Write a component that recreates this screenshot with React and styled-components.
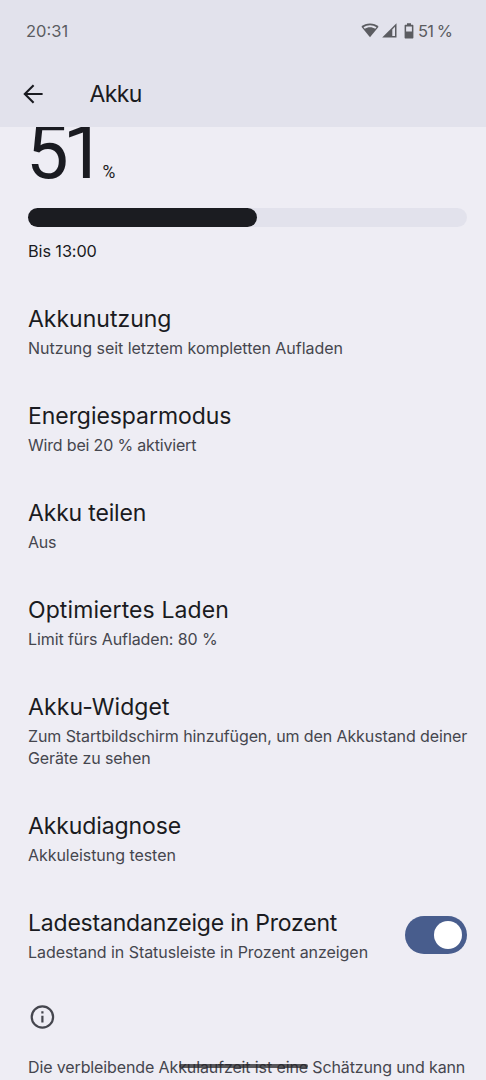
import React, { useState } from 'react'
import styled, { createGlobalStyle } from 'styled-components';

const GlobalStyle = createGlobalStyle`
  * {
    box-sizing: border-box;
  }
  body {
    margin: 0;
    background: #eeedf4;
    font-family: Inter, Roboto, sans-serif;
  }
`

const Screen = styled.div`
  position: relative;
  display: flex;
  flex-direction: column;
  width: 486px;
  height: 1080px;
  overflow: hidden;
  background: #eeedf4;
  color: #1a1b21;
`

const Header = styled.header`
  flex: none;
  height: 127px;
  background: #e2e2ec;
`

const StatusBar = styled.div`
  display: flex;
  align-items: center;
  justify-content: space-between;
  height: 61px;
  padding: 0 34px 0 26px;
  font-size: 16.5px;
  color: #5b5c61;
`

const StatusIcons = styled.div`
  display: flex;
  align-items: center;
  gap: 2px;

  svg {
    display: block;
  }
  svg:nth-of-type(1) {
    margin-right: 1px;
  }
  svg:nth-of-type(3) {
    margin: 0 2px 0 5px;
  }
`

const StatusText = styled.span`
  letter-spacing: ${({ $spacing }) => $spacing || 0}px;
`

const Toolbar = styled.div`
  display: flex;
  align-items: center;
  gap: 46px;
  height: 66px;
  padding-left: 23px;
`

const BackButton = styled.button`
  display: flex;
  padding: 0;
  border: none;
  background: none;
  color: #1a1b21;
`

const PageTitle = styled.h1`
  margin: 0;
  padding-left: 0.5px;
  font-size: 23px;
  font-weight: 370;
  letter-spacing: -0.6px;
`

const Content = styled.main`
  flex: 1;
  min-height: 0;
  overflow: hidden;
  padding: 0 19px 0 28px;
`

const Level = styled.div`
  display: flex;
  align-items: baseline;
  height: 92px;
  margin: -20px 0 0 -2px;
  line-height: 91px;
`

const LevelValue = styled.span`
  font-family: Roboto, sans-serif;
  font-size: 76px;
  letter-spacing: -6px;
`

const LevelUnit = styled.span`
  margin-left: 3px;
  font-family: Roboto, sans-serif;
  font-size: 17.5px;
`

const Track = styled.div`
  height: 19px;
  margin-top: 9px;
  border-radius: 10px;
  background: #e2e2ec;
`

const Fill = styled.div`
  height: 100%;
  border-radius: 10px;
  background: #1b1c21;
`

const Remaining = styled.p`
  margin: 13px 0 41.5px;
  font-size: 16.3px;
  line-height: 22px;
  letter-spacing: -0.1px;
`

const Row = styled.div`
  display: flex;
  align-items: center;
  justify-content: space-between;
  padding-bottom: 41.6px;
`

const RowTitle = styled.div`
  margin-bottom: 4px;
  font-size: 23px;
  font-weight: 370;
  line-height: 30px;
  white-space: nowrap;
  letter-spacing: ${({ $spacing }) => $spacing || 0}px;
`

const Summary = styled.div`
  font-size: 16px;
  line-height: 21.6px;
  color: #45464e;
  white-space: nowrap;
  letter-spacing: ${({ $spacing }) => $spacing || 0}px;
`

const Switch = styled.button`
  display: flex;
  align-items: center;
  justify-content: ${({ $on }) => ($on ? 'flex-end' : 'flex-start')};
  width: 62px;
  height: 38px;
  margin-bottom: 3px;
  padding: 0 5px;
  border: none;
  border-radius: 19px;
  background: ${({ $on }) => ($on ? '#485d8d' : '#c5c6d0')};
`

const Thumb = styled.span`
  width: 28px;
  height: 28px;
  border-radius: 50%;
  background: #fff;
`

const Footer = styled.div`
  display: flex;
  flex-direction: column;
  gap: 26px;
  margin-top: -2.4px;
`

const NavHandle = styled.div`
  position: absolute;
  left: 179px;
  bottom: 12px;
  width: 129px;
  height: 4px;
  border-radius: 2px;
  background: rgba(38, 38, 42, 0.75);
`

const items = [
  { title: 'Akkunutzung', titleSpacing: 0, summary: ['Nutzung seit letztem kompletten Aufladen'], spacing: -0.04 },
  { title: 'Energiesparmodus', titleSpacing: -0.06, summary: ['Wird bei 20 % aktiviert'], spacing: -0.18 },
  { title: 'Akku teilen', titleSpacing: -0.18, summary: ['Aus'], spacing: -0.3 },
  { title: 'Optimiertes Laden', titleSpacing: 0.1, summary: ['Limit fürs Aufladen: 80 %'], spacing: -0.1 },
  { title: 'Akku-Widget', titleSpacing: 0.1, summary: ['Zum Startbildschirm hinzufügen, um den Akkustand deiner', 'Geräte zu sehen'], spacing: -0.1 },
  { title: 'Akkudiagnose', titleSpacing: -0.1, summary: ['Akkuleistung testen'], spacing: -0.05 },
]

const WifiIcon = () => (
  <svg width="18" height="15" viewBox="0 0 18 15">
    <path d="M9 .5C5.700 .5 2.700 1.700 .4 3.700L9 14.300l8.600-10.600C15.300 1.700 12.300.5 9 .5z" fill="#5b5c61" />
    <path d="M2.500 4.300C4.300 3 6.600 2.200 9 2.200s4.700.8 6.500 2.100l-1.200 1.500C12.800 4.800 11 4.200 9 4.200s-3.800.6-5.300 1.600z" fill="#e2e2ec" />
  </svg>
)

const SignalIcon = () => (
  <svg width="15" height="15" viewBox="0 0 15 15">
    <path d="M14.500 .2V14.500H.2z" fill="#5b5c61" />
    <path d="M10.300 6.500L13 3.800V13H10.300z" fill="#e2e2ec" />
  </svg>
)

const BatteryIcon = () => (
  <svg width="10" height="16" viewBox="0 0 10 16">
    <path d="M3 .3h4v1.500h1.400c.6 0 1 .4 1 1v11.600c0 .6-.4 1-1 1H1.600c-.6 0-1-.4-1-1V2.800c0-.6.4-1 1-1H3zM2.100 3.400v5h5.800v-5z" fill="#5b5c61" fillRule="evenodd" />
  </svg>
)

const BackIcon = () => (
  <svg width="20" height="20" viewBox="0 0 20 20" fill="none" stroke="currentColor" strokeWidth="2.100">
    <path d="M19.600 10H2M10.600 1.200L1.800 10l8.800 8.800" />
  </svg>
)

const InfoIcon = () => (
  <svg width="28" height="28" viewBox="0 0 28 28" fill="none" stroke="#45464e">
    <circle cx="14.400" cy="14" r="10.700" strokeWidth="2.200" />
    <path d="M14.400 12.800v6.600M14.400 8.200v2.300" strokeWidth="2.200" />
  </svg>
)

const App = () => {
  const [showPercent, setShowPercent] = useState(true)
  const level = 51

  return (
    <Screen>
      <GlobalStyle />
      <Header>
        <StatusBar>
          <StatusText>20:31</StatusText>
          <StatusIcons>
            <WifiIcon />
            <SignalIcon />
            <BatteryIcon />
            <StatusText $spacing={-0.9}>{level} %</StatusText>
          </StatusIcons>
        </StatusBar>
        <Toolbar>
          <BackButton aria-label="Zurück"><BackIcon /></BackButton>
          <PageTitle>Akku</PageTitle>
        </Toolbar>
      </Header>
      <Content>
        <Level>
          <LevelValue>{level}</LevelValue>
          <LevelUnit>%</LevelUnit>
        </Level>
        <Track>
          <Fill style={{ width: `${level + 1.2}%` }} />
        </Track>
        <Remaining>Bis 13:00</Remaining>
        {items.map((item) => (
          <Row key={item.title}>
            <div>
              <RowTitle $spacing={item.titleSpacing}>{item.title}</RowTitle>
              {item.summary.map((line) => (
                <Summary key={line} $spacing={item.spacing}>{line}</Summary>
              ))}
            </div>
          </Row>
        ))}
        <Row>
          <div>
            <RowTitle $spacing={-0.2}>Ladestandanzeige in Prozent</RowTitle>
            <Summary $spacing={-0.06}>Ladestand in Statusleiste in Prozent anzeigen</Summary>
          </div>
          <Switch $on={showPercent} role="switch" aria-checked={showPercent} onClick={() => setShowPercent(!showPercent)}>
            <Thumb />
          </Switch>
        </Row>
        <Footer>
          <InfoIcon />
          <Summary $spacing={-0.12}>Die verbleibende Akkulaufzeit ist eine Schätzung und kann</Summary>
        </Footer>
      </Content>
      <NavHandle />
    </Screen>
  )
}

export default App
